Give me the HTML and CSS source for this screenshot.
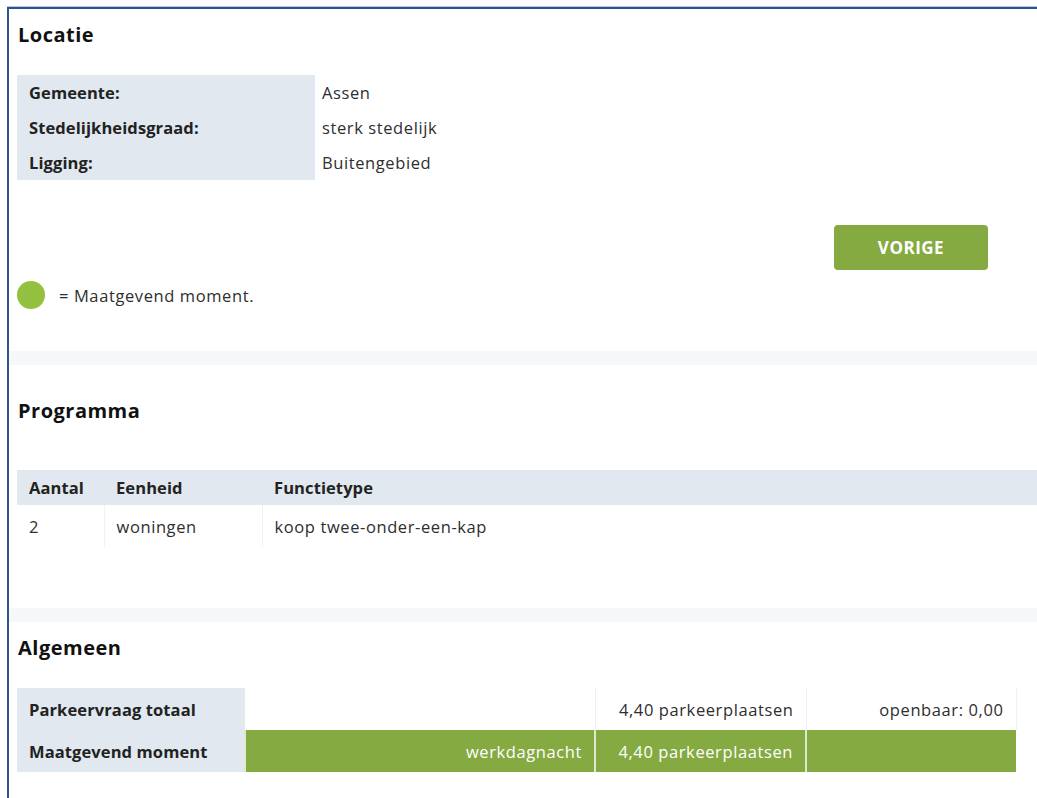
FILE: index.html
```html
<!DOCTYPE html>
<html lang="nl">
<head>
<meta charset="utf-8">
<title>Parkeerbehoefte – resultaat</title>
<link rel="stylesheet" href="styles.css">
</head>
<body>
<div class="frame">

  <section class="panel panel-locatie">
    <h2 class="panel-title">Locatie</h2>
    <table class="kv">
      <tr><th>Gemeente:</th><td>Assen</td></tr>
      <tr><th>Stedelijkheidsgraad:</th><td>sterk stedelijk</td></tr>
      <tr><th>Ligging:</th><td>Buitengebied</td></tr>
    </table>
    <div class="actions">
      <button class="btn" type="button">VORIGE</button>
    </div>
    <p class="legend"><span class="dot"></span>= Maatgevend moment.</p>
  </section>

  <div class="divider"></div>

  <section class="panel panel-programma">
    <h2 class="panel-title">Programma</h2>
    <table class="grid">
      <thead>
        <tr><th class="c-aantal">Aantal</th><th class="c-eenheid">Eenheid</th><th>Functietype</th></tr>
      </thead>
      <tbody>
        <tr><td>2</td><td>woningen</td><td>koop twee-onder-een-kap</td></tr>
      </tbody>
    </table>
  </section>

  <div class="divider"></div>

  <section class="panel panel-algemeen">
    <h2 class="panel-title">Algemeen</h2>
    <table class="summary">
      <colgroup>
        <col class="s-label"><col class="s-moment"><col class="s-total"><col class="s-public">
      </colgroup>
      <tr>
        <th>Parkeervraag totaal</th>
        <td class="blank"></td>
        <td>4,40 parkeerplaatsen</td>
        <td>openbaar: 0,00</td>
      </tr>
      <tr class="is-peak">
        <th>Maatgevend moment</th>
        <td>werkdagnacht</td>
        <td>4,40 parkeerplaatsen</td>
        <td></td>
      </tr>
    </table>
  </section>

</div>
</body>
</html>
```

FILE: styles.css
```css
html, body {
  margin: 0;
  padding: 0;
  overflow: hidden;
  background: #ffffff;
}

body {
  font-family: "Open Sans", "Liberation Sans", sans-serif;
  font-size: 16.5px;
  letter-spacing: 0.6px;
  color: #2e2e2e;
}

/* outer window frame: blue rule on top and left only */
.frame {
  margin: 7px 0 0 7px;
  border-top: 2px solid #2f5590;
  border-left: 2px solid #2f5590;
  box-shadow: 0 -1px 0 #b7c7dd;
  min-height: 900px;
}

.panel {
  padding-left: 8px;
}

.panel-title {
  margin: 0 0 0 1px;
  font-size: 20px;
  line-height: 26px;
  font-weight: 700;
  letter-spacing: 0.5px;
  color: #111111;
}

.divider {
  height: 14px;
  background: #f5f7f9;
}

/* Locatie */
.panel-locatie {
  padding-top: 13px;
  padding-bottom: 42px;
}

.panel-locatie .panel-title {
  margin-bottom: 27px;
}

.kv {
  border-collapse: collapse;
}

.kv th,
.kv td {
  height: 35px;
  padding: 0;
  text-align: left;
  vertical-align: middle;
}

.kv th {
  width: 286px;
  padding-left: 12px;
  background: #e1e8ef;
  font-weight: 700;
  letter-spacing: 0.1px;
  color: #222222;
}

.kv td {
  padding-left: 7px;
}

.actions {
  display: flex;
  justify-content: flex-end;
  padding-right: 49px;
  margin-top: 45px;
}

.btn {
  width: 154px;
  height: 45px;
  border: 0;
  border-radius: 4px;
  background: #84aa41;
  color: #ffffff;
  font-family: inherit;
  font-size: 17px;
  font-weight: 700;
  letter-spacing: 0.5px;
  cursor: pointer;
}

.legend {
  display: flex;
  align-items: center;
  gap: 14px;
  margin: 11px 0 0;
  height: 28px;
}

.dot {
  width: 28px;
  height: 28px;
  border-radius: 50%;
  background: #93c13f;
}

/* Programma */
.panel-programma {
  padding-top: 33px;
  padding-bottom: 61px;
}

.panel-programma .panel-title {
  margin-bottom: 46px;
}

.grid {
  width: 100%;
  border-collapse: collapse;
}

.grid th,
.grid td {
  padding: 0 0 0 12px;
  text-align: left;
  vertical-align: middle;
}

.grid thead th {
  height: 35px;
  background: #e1e8ef;
  font-weight: 700;
  letter-spacing: 0.1px;
  color: #222222;
}

.grid .c-aantal {
  width: 75px;
}

.grid .c-eenheid {
  width: 146px;
}

.grid tbody td {
  height: 42px;
}

.grid tbody td + td {
  border-left: 1px solid #f0f1f3;
}

/* Algemeen */
.panel-algemeen {
  padding-top: 13px;
  padding-bottom: 40px;
}

.panel-algemeen .panel-title {
  margin-bottom: 27px;
}

.summary {
  width: 999px;
  border-collapse: collapse;
  table-layout: fixed;
}

.summary .s-label { width: 228px; }
.summary .s-moment { width: 350px; }
.summary .s-total { width: 211px; }
.summary .s-public { width: 210px; }

.summary th,
.summary td {
  height: 42px;
  padding: 0 12px;
  vertical-align: middle;
}

.summary th {
  text-align: left;
  background: #e1e8ef;
  font-weight: 700;
  letter-spacing: 0.1px;
  color: #222222;
}

.summary td {
  text-align: right;
  border-left: 1px solid #eef0f2;
  border-right: 1px solid #eef0f2;
}

.summary td.blank {
  border-left: 0;
}

.summary .is-peak td {
  background: #84aa41;
  color: #ffffff;
  border-left: 2px solid #dfe9cf;
  border-right: 0;
}
```
